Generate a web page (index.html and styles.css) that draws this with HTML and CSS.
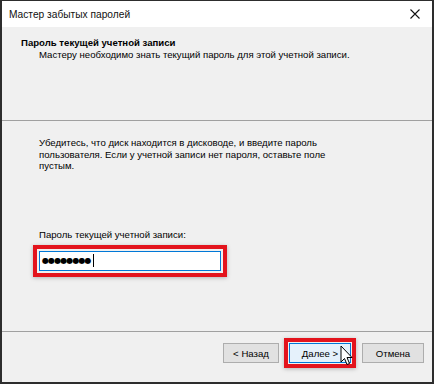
FILE: index.html
```html
<!DOCTYPE html>
<html lang="ru">
<head>
    <meta charset="UTF-8">
    <title>Мастер забытых паролей</title>
    <link rel="stylesheet" href="styles.css">
</head>
<body>
    <div class="window">
        <div class="titlebar">
            <span class="title">Мастер забытых паролей</span>
            <svg class="close" width="10" height="10" viewBox="0 0 10 10">
                <path d="M0.5 0.5 L9.5 9.5 M9.5 0.5 L0.5 9.5" stroke="#111" stroke-width="1.1" fill="none"/>
            </svg>
        </div>

        <div class="header">
            <div class="header-title">Пароль текущей учетной записи</div>
            <div class="header-sub">Мастеру необходимо знать текущий пароль для этой учетной записи.</div>
        </div>

        <div class="separator"></div>

        <div class="content">
            <p class="hint">Убедитесь, что диск находится в дисководе, и введите пароль пользователя. Если у учетной записи нет пароля, оставьте поле пустым.</p>

            <label class="field-label" for="password">Пароль текущей учетной записи:</label>
            <div class="field highlight">
                <div class="input" id="password">
                    <span class="dots">●●●●●●●●</span><span class="caret"></span>
                </div>
            </div>
        </div>

        <div class="separator"></div>

        <div class="footer">
            <button class="btn">&lt; Назад</button>
            <div class="next-wrap">
                <button class="btn btn-default highlight">Далее &gt;</button>
                <svg class="pointer" width="13" height="21" viewBox="0 0 13 21">
                    <path d="M1 1 L1 17 L4.5 13.5 L7 19.5 L9.5 18.5 L7 12.5 L12 12.5 Z" fill="#fff" stroke="#000" stroke-width="1" stroke-linejoin="round"/>
                </svg>
            </div>
            <button class="btn btn-cancel">Отмена</button>
        </div>
    </div>
</body>
</html>
```

FILE: styles.css
```css
body {
    margin: 0;
    padding: 0;
    background-color: #2b2b2b;
    font-family: 'Liberation Sans', Arial, sans-serif;
    font-size: 9.6px;
    color: #000;
}
.window {
    width: 434px;
    height: 384px;
    box-sizing: border-box;
    border: 2px solid #2d2d2d;
    border-top-width: 1px;
    background-color: #f0f0f0;
    display: flex;
    flex-direction: column;
}
.titlebar {
    height: 26px;
    flex-shrink: 0;
    background-color: #fff;
    display: flex;
    align-items: center;
    justify-content: space-between;
    padding: 0 12px 0 7px;
}
.title {
    font-size: 10.2px;
    color: #111;
}
.close {
    display: block;
}
.header {
    height: 93px;
    flex-shrink: 0;
    box-sizing: border-box;
    padding-top: 9px;
}
.header-title {
    font-weight: bold;
    line-height: 13px;
    padding-left: 19px;
}
.header-sub {
    line-height: 13px;
    padding-left: 37px;
    margin-top: -1px;
}
.separator {
    height: 1px;
    flex-shrink: 0;
    background-color: #a0a0a0;
}
.content {
    flex: 1;
    padding: 16px 20px 0 37px;
}
.hint {
    margin: 0;
    line-height: 11.6px;
    width: 292px;
}
.field-label {
    display: block;
    margin-top: 56px;
    line-height: 13px;
}
.field {
    margin-top: 10px;
    width: 182px;
}
.input {
    height: 20px;
    box-sizing: border-box;
    background-color: #fff;
    border: 1px solid #0078d7;
    display: flex;
    align-items: center;
    padding-left: 2px;
}
.dots {
    font-size: 8px;
    letter-spacing: -0.9px;
    font-family: 'DejaVu Sans', sans-serif;
}
.caret {
    width: 1px;
    height: 13px;
    margin-left: 2px;
    background-color: #000;
}
.highlight {
    box-shadow: 0 0 0 2px #f0f0f0, 0 0 0 6px #e3141d, 0 1px 4px 6px rgba(0,0,0,0.25);
}
.btn.highlight {
    box-shadow: 0 0 0 1px #f0f0f0, 0 0 0 5px #e3141d, 0 1px 4px 5px rgba(0,0,0,0.25);
}
.footer {
    height: 39px;
    flex-shrink: 0;
    display: flex;
    justify-content: flex-end;
    align-items: flex-start;
    padding: 11px 8px 0 0;
    gap: 10px;
}
.btn {
    width: 56px;
    height: 20px;
    padding: 0;
    font-family: 'Liberation Sans', Arial, sans-serif;
    font-size: 9.6px;
    color: #000;
    background-color: #e1e1e1;
    border: 1px solid #adadad;
}
.btn-default {
    width: 62px;
    background-color: #e5f1fb;
    border-color: #0078d7;
}
.btn-cancel {
    width: 62px;
    margin-left: 1px;
}
.next-wrap {
    position: relative;
}
.pointer {
    position: absolute;
    left: 51px;
    top: 2px;
}
```
